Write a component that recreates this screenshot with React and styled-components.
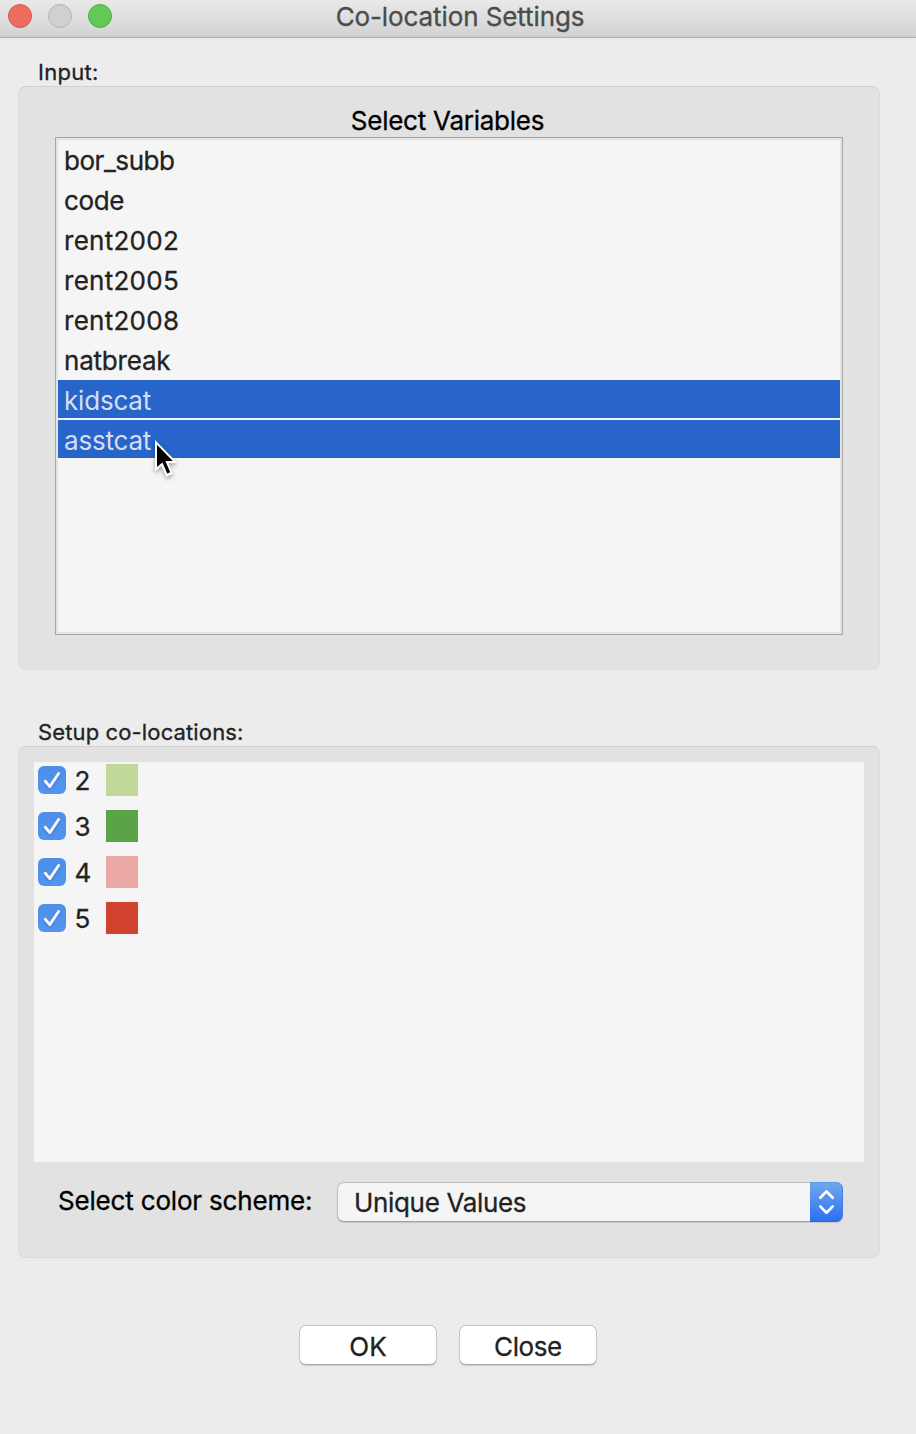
import React from "react";
import styled, { createGlobalStyle } from "styled-components";

const GlobalStyle = createGlobalStyle`
  * { box-sizing: border-box; }
  body {
    margin: 0;
    background: #ececec;
    font-family: Inter, "Liberation Sans", sans-serif;
    font-size: 26px;
    color: #222;
  }
`;

const Window = styled.div`
  width: 916px;
  height: 1434px;
  overflow: hidden;
  background: #ececec;
  display: flex;
  flex-direction: column;
`;

const TitleBar = styled.header`
  height: 38px;
  flex: none;
  display: grid;
  grid-template-columns: 112px 1fr 108px;
  background: linear-gradient(#e9e9e9, #d2d2d2);
  border-bottom: 1px solid #afafaf;
  box-shadow: inset 0 -1px 0 #c9c9c9;
`;

const Lights = styled.div`
  display: flex;
  gap: 16px;
  padding: 4px 0 0 8px;
`;

const Light = styled.span`
  width: 24px;
  height: 24px;
  border-radius: 50%;
  background: ${(p) => p.$fill};
  border: 1px solid ${(p) => p.$edge};
`;

const Label = styled.span`
  display: block;
  white-space: nowrap;
  color: ${(p) => p.$color || "#222"};
  font-size: ${(p) => p.$size || 26}px;
  letter-spacing: ${(p) => p.$track || 0}px;
  line-height: ${(p) => p.$line || 32}px;
  -webkit-text-stroke: ${(p) => p.$weight ?? 0.3}px currentColor;
`;

const Title = styled.h1`
  margin: 0;
  font-weight: 400;
  text-align: center;
  padding-top: 1px;
`;

const Content = styled.main`
  padding: 20px 36px 0 18px;
`;

const Legend = styled.div`
  padding-left: 20px;
  height: 28px;
`;

const Panel = styled.section`
  height: ${(p) => p.$height}px;
  padding: ${(p) => p.$pad};
  background: #e2e2e2;
  border: 1px solid #dcdcdc;
  border-top-color: #d0d0d0;
  border-radius: 8px;
`;

const Group = styled.div`
  margin-bottom: ${(p) => p.$gap}px;
`;

const ListTitle = styled.div`
  text-align: center;
  height: 32px;
  padding-right: 3px;
`;

const ListBox = styled.ul`
  position: relative;
  list-style: none;
  margin: 0;
  height: 498px;
  background: #f5f5f5;
  border: 1px solid #a6a6a6;
  box-shadow: inset 0 0 0 2px #e4e4e4;
  padding: 2px;
  display: flex;
  flex-direction: column;
  gap: 2px;
`;

const ListItem = styled.li`
  height: 38px;
  padding: 5px 0 0 6px;
  background: ${(p) => (p.$selected ? "#2765ca" : "transparent")};
`;

const Pointer = styled.svg`
  position: absolute;
  left: 94px;
  top: 298px;
  overflow: visible;
  filter: drop-shadow(0 2px 2px rgba(0, 0, 0, 0.35));
`;

const Canvas = styled.div`
  height: 400px;
  padding: 2px 4px;
  background: #f5f5f5;
  display: flex;
  flex-direction: column;
  gap: 14px;
`;

const CategoryRow = styled.label`
  height: 32px;
  display: grid;
  grid-template-columns: 28px 40px 32px;
  grid-template-rows: 32px;
  align-items: center;
`;

const CheckBox = styled.span`
  width: 28px;
  height: 28px;
  border-radius: 6px;
  background: linear-gradient(#4d8ee8, #5394ef);
`;

const CheckMark = styled.svg`
  display: block;
  filter: drop-shadow(0 1px 1px rgba(20, 60, 140, 0.35));
`;

const CategoryName = styled.span`
  padding: 2px 0 0 8.5px;
`;

const Swatch = styled.span`
  width: 32px;
  height: 32px;
  background: ${(p) => p.$fill};
`;

const SchemeRow = styled.div`
  display: grid;
  grid-template-columns: 279px 506px;
  padding: 20px 0 0 24px;
`;

const SchemeLabel = styled.div`
  padding-top: 3px;
`;

const Select = styled.div`
  height: 40px;
  display: grid;
  grid-template-columns: 1fr 33px;
  border-radius: 7px;
  background: #f5f5f5;
  border: 1px solid #bdbdbd;
  border-bottom-color: #a0a0a0;
  border-right: 0;
  box-shadow: 0 1px 1px rgba(0, 0, 0, 0.12);
`;

const SelectValue = styled.div`
  padding: 4px 0 0 16px;
`;

const Stepper = styled.span`
  margin: -1px 0;
  height: 40px;
  background: linear-gradient(#70a8ee, #2c70ee);
  border: 1px solid #2e66e0;
  border-top-color: #5b97e8;
  border-left: 0;
  border-right-color: #447fe8;
  border-radius: 0 7px 7px 0;
`;

const Actions = styled.footer`
  display: flex;
  gap: 22px;
  padding-left: 281px;
`;

const Button = styled.button`
  width: 138px;
  height: 40px;
  padding: 3px 0 0;
  font: inherit;
  background: #fff;
  border: 1px solid #c6c6c6;
  border-bottom-color: #ababab;
  border-radius: 7px;
  box-shadow: 0 1px 1px rgba(0, 0, 0, 0.14);
`;

const variables = [
  { name: "bor_subb", track: -0.45 },
  { name: "code", track: -0.4 },
  { name: "rent2002", track: 0.27 },
  { name: "rent2005", track: 0.27 },
  { name: "rent2008", track: 0.27 },
  { name: "natbreak", track: -0.2 },
  { name: "kidscat", track: -0.2, selected: true },
  { name: "asstcat", track: -0.2, selected: true },
];

const categories = [
  { name: "2", fill: "#c0d99b" },
  { name: "3", fill: "#59a448" },
  { name: "4", fill: "#e9a8a4" },
  { name: "5", fill: "#d0412f" },
];

function Check() {
  return (
    <CheckBox>
      <CheckMark width="28" height="28" viewBox="0 0 28 28" fill="none" stroke="#f8f8f8" strokeWidth="2.9" strokeLinecap="round" strokeLinejoin="round">
        <path d="M7.3 15.2 11.8 20.6 20.6 7.5" />
      </CheckMark>
    </CheckBox>
  );
}

export default function App() {
  return (
    <Window>
      <GlobalStyle />
      <TitleBar>
        <Lights>
          <Light $fill="#ee6b60" $edge="#d9534a" />
          <Light $fill="#d0d0d0" $edge="#b4b4b4" />
          <Light $fill="#62c956" $edge="#4cae3f" />
        </Lights>
        <Title>
          <Label $color="#4b4b4b" $track={-0.1}>Co-location Settings</Label>
        </Title>
      </TitleBar>
      <Content>
        <Group $gap={48}>
          <Legend>
            <Label $size={22} $line={28} $track={0.3}>Input:</Label>
          </Legend>
          <Panel $height={584} $pad="18px 36px 0">
            <ListTitle>
              <Label $color="#000" $track={-0.25}>Select Variables</Label>
            </ListTitle>
            <ListBox>
              {variables.map(({ name, track, selected }) => (
                <ListItem key={name} $selected={selected}>
                  <Label $color={selected ? "#d5def2" : "#222"} $track={track} $weight={selected ? 0 : 0.3}>
                    {name}
                  </Label>
                </ListItem>
              ))}
              <Pointer width="30" height="44" viewBox="0 0 30 44">
                <path d="M5 4V35.4L11.6 29.8L16.2 40.8L22.8 38L18.4 27H27.6Z" fill="#fff" />
                <path d="M7 8.8V31L12.4 26.4L17.2 37.6L20.2 36.2L15.4 25H22.8Z" fill="#000" />
              </Pointer>
            </ListBox>
          </Panel>
        </Group>
        <Group $gap={67}>
          <Legend>
            <Label $size={22} $line={28} $track={0.13}>Setup co-locations:</Label>
          </Legend>
          <Panel $height={512} $pad="15px 15px 0">
            <Canvas>
              {categories.map(({ name, fill }) => (
                <CategoryRow key={name}>
                  <Check />
                  <CategoryName>
                    <Label>{name}</Label>
                  </CategoryName>
                  <Swatch $fill={fill} />
                </CategoryRow>
              ))}
            </Canvas>
            <SchemeRow>
              <SchemeLabel>
                <Label $color="#000" $track={-0.18}>Select color scheme:</Label>
              </SchemeLabel>
              <Select>
                <SelectValue>
                  <Label $track={-0.33}>Unique Values</Label>
                </SelectValue>
                <Stepper>
                  <svg width="32" height="38" viewBox="0 0 32 38" fill="none" stroke="#fff" strokeWidth="2.7" strokeLinecap="round" strokeLinejoin="round">
                    <path d="M10.3 14.8 16.5 8.4 22.7 14.8M10.3 23.4 16.5 29.8 22.7 23.4" />
                  </svg>
                </Stepper>
              </Select>
            </SchemeRow>
          </Panel>
        </Group>
        <Actions>
          <Button>
            <Label>OK</Label>
          </Button>
          <Button>
            <Label $track={-0.4}>Close</Label>
          </Button>
        </Actions>
      </Content>
    </Window>
  );
}
